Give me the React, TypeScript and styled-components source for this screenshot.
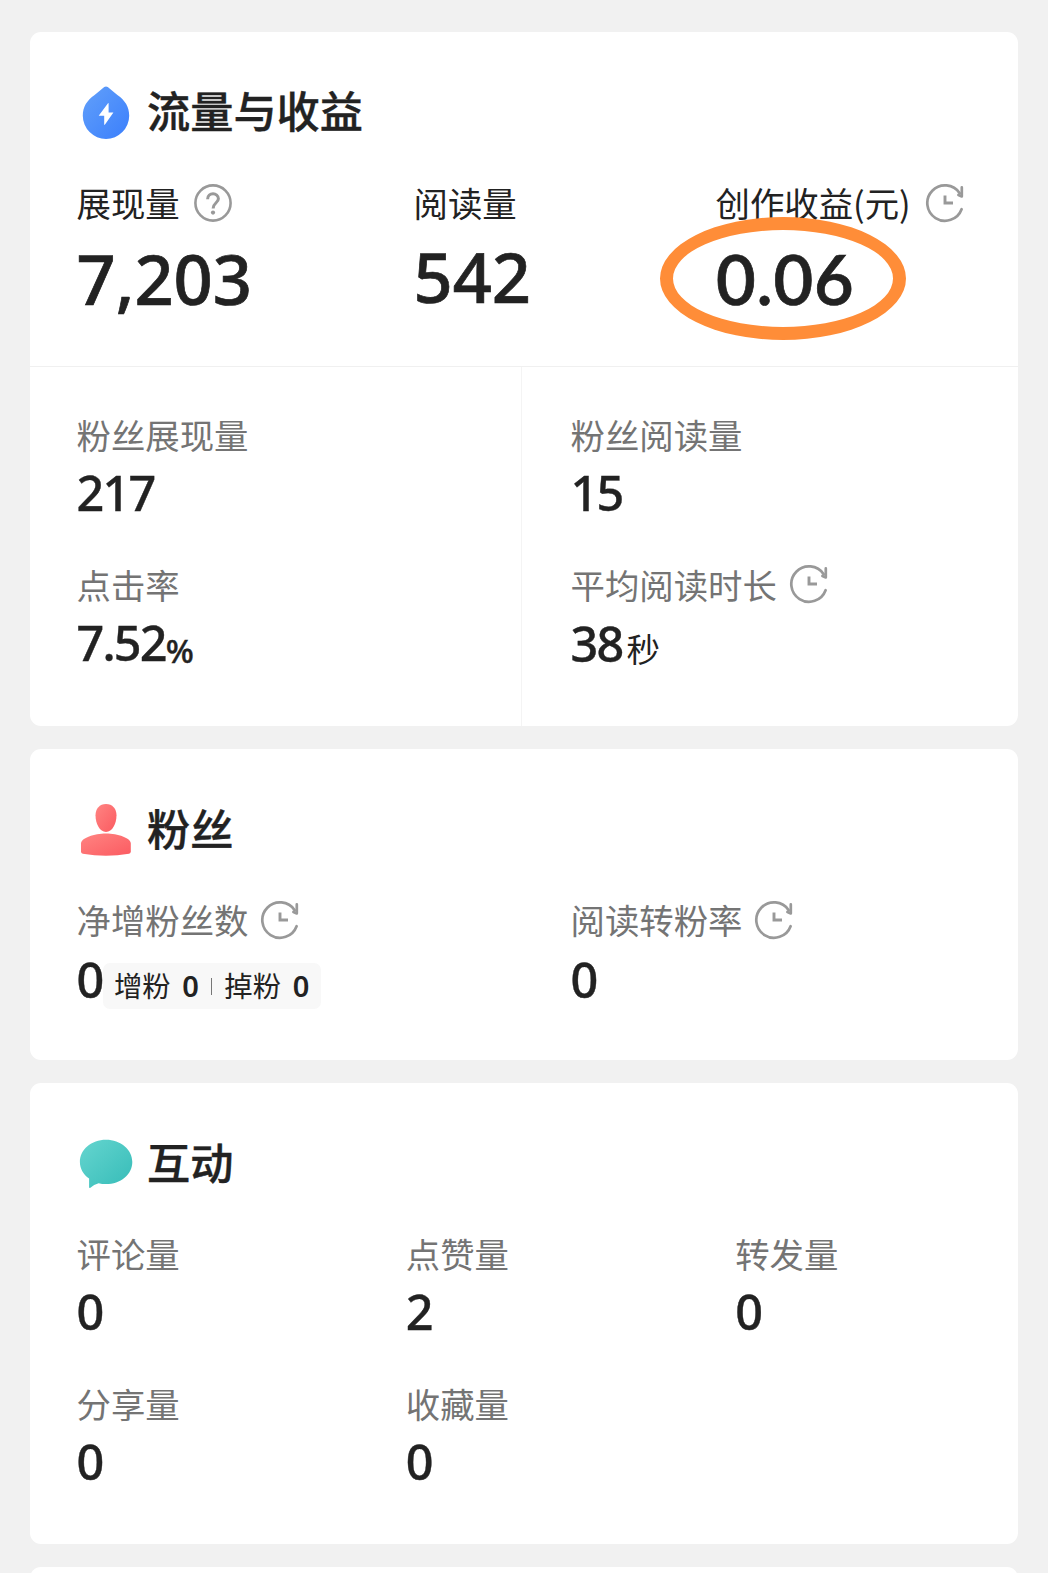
import React from "react";
import styled, { createGlobalStyle } from "styled-components";

const GlobalStyle = createGlobalStyle`
  * { box-sizing: border-box; }
  html, body { margin: 0; background: #f1f1f1; }
  body {
    height: 1573px;
    overflow: hidden;
    color: #222;
    font-family: "Noto Sans CJK SC", sans-serif;
  }
`;

const Page = styled.main`
  display: flex;
  flex-direction: column;
  gap: 23px;
  height: 1573px;
  padding: 32px 30px 0;
  overflow: hidden;
`;

const Card = styled.section<{ $height: number }>`
  flex: 0 0 ${(p) => p.$height}px;
  width: 988px;
  background: #fff;
  border-radius: 11px;
`;

const Heading = styled.header`
  display: flex;
  align-items: center;
  gap: 14px;
  height: 104px;
  margin: 29px 0 17px;
  padding-left: 49px;
`;

const Title = styled.h2<{ $lift?: number }>`
  margin: 0 0 ${(p) => 6 + (p.$lift ?? 0)}px;
  font-size: 43.2px;
  line-height: 60px;
  font-weight: 500;
  -webkit-text-stroke: 0.4px #222;
`;

const Overview = styled.div`
  display: grid;
  grid-template-columns: 337px 302px 1fr;
  align-items: start;
  height: 185px;
  padding-left: 46.5px;
  border-bottom: 1px solid #f0f0f0;
`;

const Details = styled.div`
  display: grid;
  grid-template-columns: 491.5px 1fr;
  height: 359px;
`;

const DetailColumn = styled.div<{ $divided?: boolean }>`
  display: flex;
  flex-direction: column;
  gap: 42px;
  padding: 46.5px 0 0 ${(p) => (p.$divided ? 46.5 : 49)}px;
  border-right: ${(p) => (p.$divided ? "1px solid #f4f4f4" : "0")};
`;

const StatGrid = styled.div<{ $columns: number }>`
  display: grid;
  grid-template-columns: repeat(${(p) => p.$columns}, 1fr);
  row-gap: 42px;
`;

const StatCell = styled.div<{ $inset?: boolean }>`
  padding-left: ${(p) => (p.$inset ? 46.5 : 0)}px;
`;

const Label = styled.div<{ $strong?: boolean }>`
  display: flex;
  align-items: center;
  gap: ${(p) => (p.$strong ? 14 : 12)}px;
  height: 40px;
  font-size: 34.4px;
  line-height: 40px;
  white-space: nowrap;
  color: ${(p) => (p.$strong ? "#222" : "#747474")};

  svg { margin-top: ${(p) => (p.$strong ? 2 : 1)}px; }
`;

const Value = styled.div<{ $large?: boolean; $raise?: number }>`
  display: flex;
  align-items: baseline;
  height: ${(p) => (p.$large ? 80 : 60)}px;
  margin-top: ${(p) => (p.$large ? 16 : 8) - (p.$raise ?? 0)}px;
  font-family: "Noto Sans", sans-serif;
  font-size: ${(p) => (p.$large ? 68.5 : 48.5)}px;
  line-height: ${(p) => (p.$large ? 80 : 60)}px;
  font-weight: 500;
  letter-spacing: ${(p) => (p.$large ? 0 : -1.8)}px;
  -webkit-text-stroke: ${(p) => (p.$large ? 0.7 : 0.4)}px #222;
`;

const Percent = styled.span`
  position: relative;
  top: 2px;
  font-size: 33px;
  line-height: 40px;
`;

const Seconds = styled.span`
  margin-left: 4px;
  font-family: "Noto Sans CJK SC", sans-serif;
  font-size: 33.5px;
  line-height: 40px;
  font-weight: 400;
  -webkit-text-stroke: 0;
`;

const Highlighted = styled.div`
  position: relative;
  padding-left: 0.5px;
  font-family: Lato, sans-serif;
  font-weight: 600;
  letter-spacing: 0.8px;
`;

const HighlightRing = styled.span`
  position: absolute;
  top: -22px;
  left: -55.5px;
  width: 246px;
  height: 123px;
  border: 13.5px solid #ff8d38;
  border-radius: 50%;
`;

const Change = styled.div`
  display: flex;
  align-self: flex-start;
  align-items: center;
  height: 46px;
  margin: 14px 0 0 0.5px;
  padding: 0 11.5px 0 11px;
  border-radius: 7px;
  background: #f8f8f8;
  font-family: "Noto Sans CJK SC", sans-serif;
  font-size: 28.4px;
  line-height: 40px;
  font-weight: 400;
  letter-spacing: 0;
  -webkit-text-stroke: 0;
`;

const ChangeLabel = styled.span`
  margin-top: -2px;
`;

const ChangeCount = styled.b`
  margin-left: 11.5px;
  font-family: "Noto Sans", sans-serif;
  font-size: 29px;
  font-weight: 600;
`;

const ChangeDivider = styled.i`
  width: 1.5px;
  height: 17px;
  margin: 0 12px;
  background: #777;
`;

function DropIcon() {
  return (
    <svg width="54" height="54" viewBox="0 0 54 54">
      <defs>
        <linearGradient id="drop" x1="0" y1="0" x2="1" y2="1">
          <stop offset="0" stopColor="#62a0fa" />
          <stop offset="1" stopColor="#3b7ffc" />
        </linearGradient>
      </defs>
      <path d="M25.2 1Q27-.2 28.8 1Q33 4.6 38.4 9C46.2 14.4 50.2 21 50.2 29.7A23.2 23.2 0 0 1 3.8 29.7C3.8 21 7.8 14.4 15.6 9Q21 4.6 25.2 1Z" fill="url(#drop)" />
      <path d="M29 17.2 19.7 29.7H25.2V38.5Q25.3 39.4 26 38.6L34.4 26.4H29.6V17.6Q29.6 16.8 29 17.2Z" fill="#fff" />
    </svg>
  );
}

function PersonIcon() {
  return (
    <svg width="54" height="54" viewBox="0 0 54 54">
      <defs>
        <linearGradient id="person" x1="0" y1="0" x2="1" y2="1">
          <stop offset="0" stopColor="#ff8482" />
          <stop offset="1" stopColor="#fb5b61" />
        </linearGradient>
      </defs>
      <path d="M27 1C20.6 1 16.5 5.7 16.5 12.3C16.5 21 20.8 29 27 29S37.5 21 37.5 12.3C37.5 5.7 33.4 1 27 1Z" fill="url(#person)" />
      <path d="M2 40.5C2 35.2 15.2 30.6 27 30.6S51.8 35.2 51.8 40.5V48.4Q51.8 50.3 50 50.8Q27 54.6 3.8 50.8Q2 50.3 2 48.4Z" fill="url(#person)" />
    </svg>
  );
}

function BubbleIcon() {
  return (
    <svg width="54" height="54" viewBox="0 0 54 54">
      <defs>
        <linearGradient id="bubble" x1="0" y1="0" x2="1" y2="1">
          <stop offset="0" stopColor="#65d5cf" />
          <stop offset="1" stopColor="#36bcb8" />
        </linearGradient>
      </defs>
      <path d="M27 2.7C41.6 2.7 53.3 12.5 53.3 24.9S41.6 47.1 27 47.1Q23 47.1 19.6 46.2Q14.8 47.6 11.4 50.8Q10.1 51.6 10.1 50V41.4C4.3 37.4.9 31.5.9 24.9C.9 12.5 12.4 2.7 27 2.7Z" fill="url(#bubble)" />
    </svg>
  );
}

function ClockIcon() {
  return (
    <svg width="40" height="40" viewBox="0 0 40 40" fill="none" stroke="#999" strokeWidth="2.7">
      <path d="M36.6 26.2A17.7 17.7 0 1 1 34.7 10.2" strokeLinecap="round" />
      <path d="M36.8 4.4V13.4L33.4 12" strokeLinecap="round" strokeLinejoin="round" />
      <path d="M20 12.5V20H28" strokeWidth="2.9" />
    </svg>
  );
}

function HelpIcon() {
  return (
    <svg width="40" height="40" viewBox="0 0 40 40" fill="none" stroke="#999" strokeWidth="2.6">
      <circle cx="19" cy="20" r="17.6" />
      <path d="M13.6 16.2C13.6 9 24.4 9.2 24.4 15.8C24.4 19.7 19.1 20 19.1 25.4" strokeWidth="3" />
      <circle cx="19" cy="29.6" r="2.1" fill="#999" stroke="none" />
    </svg>
  );
}

function Stat(props: {
  label: string;
  value: React.ReactNode;
  icon?: React.ReactNode;
  large?: boolean;
  inset?: boolean;
  raise?: number;
}) {
  return (
    <StatCell $inset={props.inset}>
      <Label $strong={props.large}>
        {props.label}
        {props.icon}
      </Label>
      <Value $large={props.large} $raise={props.raise}>{props.value}</Value>
    </StatCell>
  );
}

export default function App() {
  return (
    <>
      <GlobalStyle />
      <Page>
        <Card $height={694}>
          <Heading>
            <DropIcon />
            <Title $lift={3}>流量与收益</Title>
          </Heading>
          <Overview>
            <Stat large label="展现量" value="7,203" icon={<HelpIcon />} raise={-1} />
            <Stat large label="阅读量" value="542" raise={1} />
            <Stat large label="创作收益(元)" value={<Highlighted>0.06<HighlightRing /></Highlighted>} icon={<ClockIcon />} raise={-1} />
          </Overview>
          <Details>
            <DetailColumn $divided>
              <Stat label="粉丝展现量" value="217" />
              <Stat label="点击率" value={<>7.52<Percent>%</Percent></>} />
            </DetailColumn>
            <DetailColumn>
              <Stat label="粉丝阅读量" value="15" />
              <Stat label="平均阅读时长" value={<>38<Seconds>秒</Seconds></>} icon={<ClockIcon />} raise={-1} />
            </DetailColumn>
          </Details>
        </Card>

        <Card $height={311}>
          <Heading>
            <PersonIcon />
            <Title>粉丝</Title>
          </Heading>
          <StatGrid $columns={2}>
            <Stat
              inset
              label="净增粉丝数"
              icon={<ClockIcon />}
              raise={-2}
              value={
                <>
                  0
                  <Change>
                    <ChangeLabel>增粉</ChangeLabel>
                    <ChangeCount>0</ChangeCount>
                    <ChangeDivider />
                    <ChangeLabel>掉粉</ChangeLabel>
                    <ChangeCount>0</ChangeCount>
                  </Change>
                </>
              }
            />
            <Stat inset label="阅读转粉率" value="0" icon={<ClockIcon />} raise={-2} />
          </StatGrid>
        </Card>

        <Card $height={461}>
          <Heading>
            <BubbleIcon />
            <Title>互动</Title>
          </Heading>
          <StatGrid $columns={3}>
            <Stat inset label="评论量" value="0" />
            <Stat inset label="点赞量" value="2" />
            <Stat inset label="转发量" value="0" />
            <Stat inset label="分享量" value="0" />
            <Stat inset label="收藏量" value="0" />
          </StatGrid>
        </Card>

        <Card $height={60} />
      </Page>
    </>
  );
}
